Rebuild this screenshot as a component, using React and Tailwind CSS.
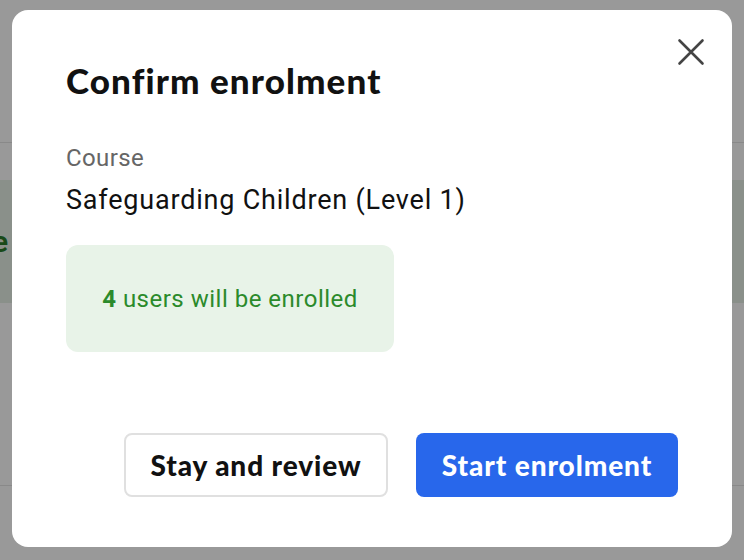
import React from 'react'

function CloseIcon() {
  return (
    <svg width="28" height="28" viewBox="0 0 28 28" fill="none">
      <path d="M2.5 2.5 L25.5 25.5 M25.5 2.5 L2.5 25.5" stroke="#444" strokeWidth="2.6" strokeLinecap="round" />
    </svg>
  )
}

export default function App() {
  const heading = { fontFamily: 'Lato, "Noto Sans", sans-serif' }
  const body = { fontFamily: 'Roboto, "Noto Sans", sans-serif' }

  return (
    <div className="relative h-[560px] w-[744px] overflow-hidden bg-white" style={body}>
      {/* page behind the dialog */}
      <div className="flex flex-col">
        <div className="h-[143px] border-b border-[#e4e4e4]" />
        <div className="h-[37px]" />
        <div className="flex h-[123px] items-center bg-[#e6f1e6]">
          <span className="-ml-[8px] text-[30px] font-semibold text-[#2b7a2b]">e</span>
        </div>
        <div className="h-[183px] border-b border-[#e4e4e4]" />
      </div>

      {/* backdrop + dialog */}
      <div className="absolute inset-0 bg-black/40">
        <div className="absolute left-[12px] top-[10px] flex h-[537px] w-[720px] flex-col rounded-2xl bg-white px-[54px]">
          <button className="absolute right-[27px] top-[28px] flex items-center justify-center">
            <CloseIcon />
          </button>

          <h2
            className="mt-[50px] text-[35px] font-black leading-[40px] tracking-[1.1px] text-[#111]"
            style={heading}
          >
            Confirm enrolment
          </h2>

          <div className="mt-[43px] text-[24px] leading-[30px] tracking-[0.4px] text-[#666]">Course</div>
          <div className="mt-[10px] text-[27px] leading-[34px] tracking-[0.8px] text-[#111]">
            Safeguarding Children (Level 1)
          </div>

          <div className="mt-[28px] flex h-[107px] w-[328px] items-center justify-center rounded-xl bg-[#e8f3e8]">
            <span className="text-[24px] tracking-[0.5px] text-[#2b8a2b]">
              <span className="font-bold">4</span> users will be enrolled
            </span>
          </div>

          <div className="mt-auto mb-[50px] flex justify-end gap-[28px]">
            <button
              className="flex h-[64px] w-[264px] items-center justify-center rounded-lg border-2 border-[#e0e0e0] bg-white text-[28px] font-black tracking-[0.9px] text-[#111]"
              style={heading}
            >
              Stay and review
            </button>
            <button
              className="flex h-[64px] w-[262px] items-center justify-center rounded-lg bg-[#2867eb] text-[28px] font-black tracking-[0.9px] text-white"
              style={heading}
            >
              Start enrolment
            </button>
          </div>
        </div>
      </div>
    </div>
  )
}
